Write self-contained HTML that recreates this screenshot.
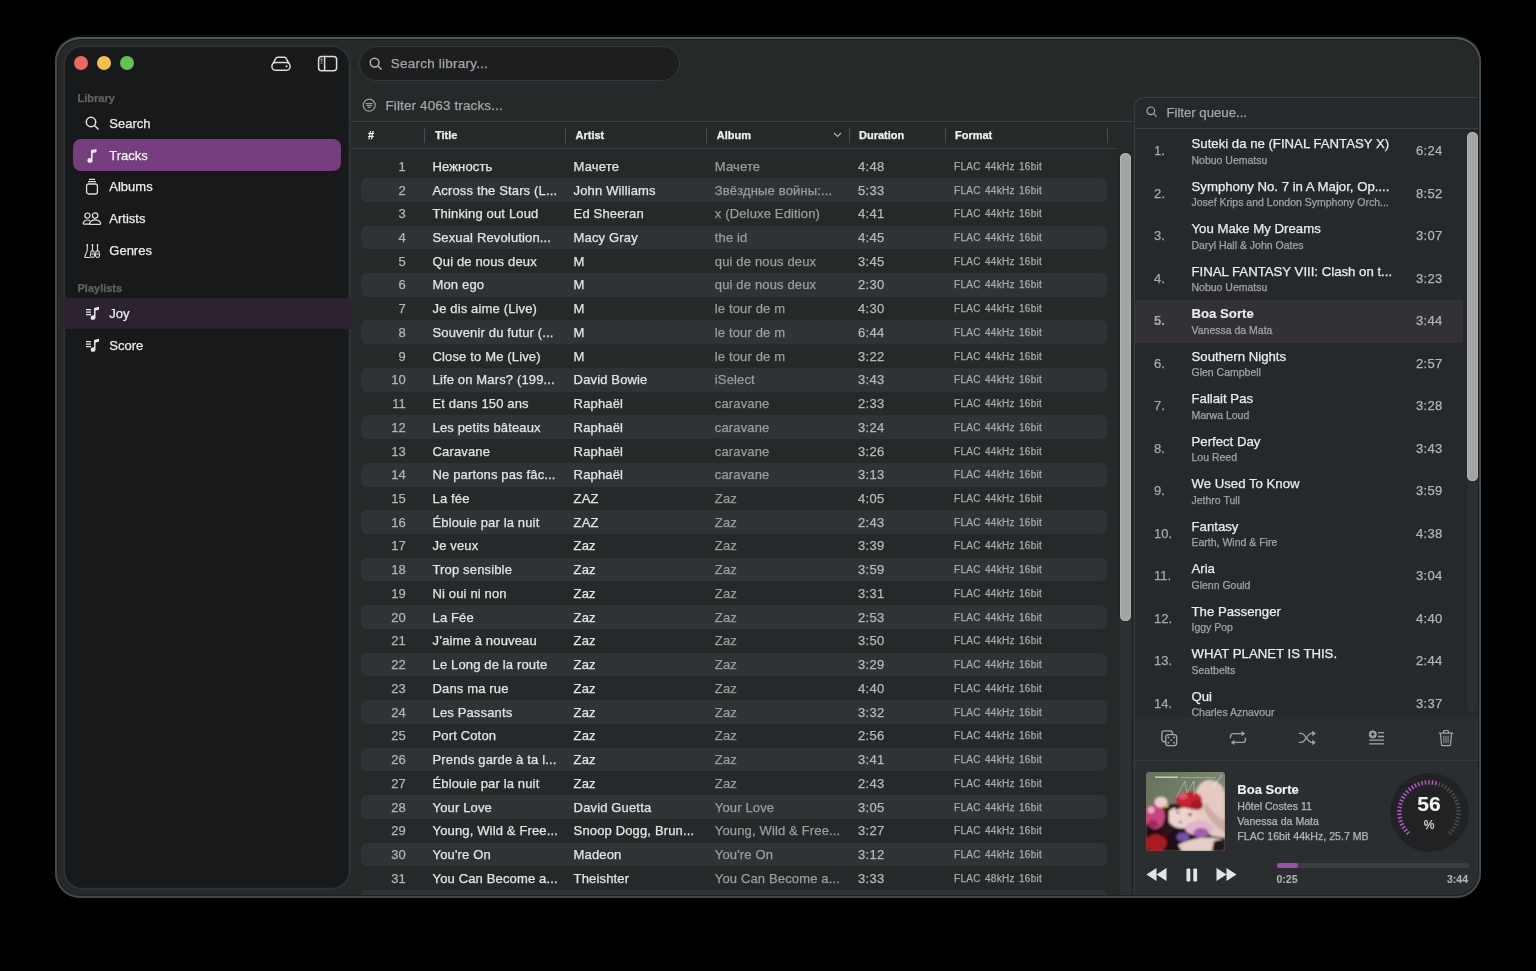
<!DOCTYPE html>
<html><head><meta charset="utf-8">
<style>
*{margin:0;padding:0;box-sizing:border-box}
html,body{width:1536px;height:971px;overflow:hidden;background:#000}
body{position:relative;font-family:"Liberation Sans",sans-serif;color:#e8e8e8}
.abs{position:absolute}
.t{position:absolute;white-space:nowrap;line-height:20px;height:20px;-webkit-text-stroke:0.25px currentColor}
#win{position:absolute;left:55px;top:37px;width:1426px;height:861px;border-radius:25px;background:#25292a}
#clip{position:absolute;left:0;top:0;width:1536px;height:971px;clip-path:inset(37px 55px 73px 55px round 25px);will-change:transform}
#winborder{position:absolute;left:55px;top:37px;width:1426px;height:861px;border-radius:25px;box-shadow:inset 0 2px 0 0 #535658,inset 0 0 0 2px #45484a,inset 0 0 0 3px #1d2022,0 -1.5px 0 0.5px #0e0f10}
#side{position:absolute;left:63px;top:45px;width:288px;height:845px;border-radius:19px;background:#18191b;box-shadow:inset 0 0 0 2px #2e3234,inset 0 0 0 3px #1c1f20;overflow:hidden}
.light{position:absolute;top:56px;width:14px;height:14px;border-radius:50%}
.lbl{font-size:11px;font-weight:bold;color:#606264}
.si{font-size:13px;color:#ececec}
.pill{position:absolute;left:73px;top:139px;width:267.7px;height:32px;border-radius:8px;background:#773e7f}
.joy{position:absolute;left:63px;top:297.5px;width:288px;height:31.7px;background:#2d2230}
#search{position:absolute;left:358.5px;top:45.5px;width:321.5px;height:35.5px;border-radius:17.75px;background:#1c1e20;box-shadow:inset 0 0 0 1px #36393b}
.ph{font-size:13.5px;color:#a4a6a8}
.hline{position:absolute;height:1px;background:#3a3d3f}
.hd{font-size:11px;font-weight:bold;color:#f0f0f0}
.sep{position:absolute;top:128px;width:1px;height:15px;background:#4a4d4f}
.band{position:absolute;left:360.5px;width:746.5px;height:23.73px;border-radius:6px;background:#2f3335}
.num{font-size:13px;color:#b4b4b4}
.ti{font-size:13px;color:#e4e4e4;letter-spacing:0.15px}
.al{font-size:13px;color:#9c9c9c;letter-spacing:0.15px}
.du{font-size:13px;color:#b8b8b8;letter-spacing:0.3px}
.fmt{font-size:10px;color:#a9a9a9;letter-spacing:0.3px;word-spacing:-1px}
#queue{position:absolute;left:1134px;top:97px;width:347px;height:800px;background:#26292b;border-top-left-radius:10px;box-shadow:inset 1px 1px 0 #3a3d3f}
.qnum{font-size:13px;color:#a8a8a8}
.qti{font-size:13.2px;color:#ececec}
.qar{font-size:10.5px;color:#a2a2a2}
.qdu{font-size:13px;color:#b4b4b4;letter-spacing:0.3px}
.b{font-weight:bold;-webkit-text-stroke:0.1px currentColor}
.qsel{position:absolute;left:1135px;width:328px;height:43px;background:#333036}
.np{font-size:10.6px;color:#b4b4b4}
svg{position:absolute;overflow:visible}
</style></head><body>
<div id="win"></div>
<div id="clip">
<div id="side"></div>
<div class="light" style="left:74px;background:#ec6a5f"></div>
<div class="light" style="left:97px;background:#f4c04f"></div>
<div class="light" style="left:120px;background:#61c454"></div>

<!-- sidebar top icons -->
<svg style="left:270px;top:55px" width="22" height="17" viewBox="0 0 22 17" fill="none" stroke="#dcdcdc" stroke-width="1.5"><path d="M3 8.6 L5.8 3.4 C6.2 2.6 6.8 2.2 7.7 2.2 H14.3 C15.2 2.2 15.8 2.6 16.2 3.4 L19 8.6"/><rect x="1.9" y="7.4" width="18.2" height="7.9" rx="3.9"/><circle cx="16.5" cy="11.35" r="1.05" fill="#dcdcdc" stroke="none"/></svg>
<svg style="left:317px;top:55px" width="21" height="17" viewBox="0 0 21 17" fill="none" stroke="#dcdcdc" stroke-width="1.5"><rect x="1.6" y="1.5" width="18" height="14.2" rx="3"/><path d="M7.6 1.5 V15.7"/><path d="M3.6 4.2 H5.4" stroke-width="1.1"/><path d="M3.6 6.2 H5.4" stroke-width="1.1" stroke-opacity="0.8"/><path d="M3.6 8.3 H5.4" stroke-width="1.1" stroke-opacity="0.6"/></svg>

<div class="t lbl" style="left:77.5px;top:88px">Library</div>
<svg style="left:85px;top:116px" width="15" height="15" viewBox="0 0 15 15" fill="none" stroke="#e6e6e6" stroke-width="1.5"><circle cx="6" cy="6" r="4.7"/><path d="M9.5 9.5 L13.5 13.5"/></svg>
<div class="t si" style="left:109.3px;top:114.2px">Search</div>
<div class="pill"></div>
<svg style="left:86px;top:148px" width="12" height="16" viewBox="0 0 12 16" fill="#f0f0f0"><path d="M5 2 L10.5 1 V4.2 L6.6 5 V12.3 A2.6 2.4 0 1 1 5 10.2 Z"/></svg>
<div class="t si" style="left:109.3px;top:145.8px;color:#f4f4f4">Tracks</div>
<svg style="left:84px;top:177px" width="16" height="19" viewBox="0 0 16 19" fill="none" stroke="#dedede" stroke-width="1.3"><rect x="2.6" y="7" width="10.8" height="10" rx="2"/><path d="M4 4.6 H12 M5 2.4 H11"/></svg>
<div class="t si" style="left:109.3px;top:177px">Albums</div>
<svg style="left:82px;top:211px" width="20" height="15" viewBox="0 0 20 15" fill="none" stroke="#dedede" stroke-width="1.2"><circle cx="5.4" cy="4.6" r="2.6"/><circle cx="13.1" cy="4.6" r="2.7"/><path d="M8.2 13.2 H2.2 C1.2 13.2 1 12.6 1.3 11.8 C2 10 3.6 9 5.4 9 C6.4 9 7.3 9.3 8 9.8"/><path d="M8.8 13.4 H17.6 C18.6 13.4 18.9 12.8 18.6 12 C17.8 10 15.7 8.8 13.1 8.8 C10.5 8.8 8.5 10 7.7 12 C7.4 12.8 7.7 13.4 8.8 13.4 Z"/></svg>
<div class="t si" style="left:109.3px;top:209.2px">Artists</div>
<svg style="left:83px;top:243px" width="19" height="17" viewBox="0 0 19 17" fill="none" stroke="#dedede" stroke-width="1.1"><path d="M4.3 1.6 V7.6 M9.5 1.6 V7.8 M14.5 1.6 V7.6"/><circle cx="4.3" cy="1.9" r="0.9" fill="#dedede" stroke="none"/><circle cx="9.5" cy="1.9" r="0.9" fill="#dedede" stroke="none"/><circle cx="14.5" cy="1.9" r="0.9" fill="#dedede" stroke="none"/><path d="M4.3 7.4 L1.9 13.2 C1.6 14 2 14.5 2.8 14.5 H7.2"/><path d="M9.5 7.6 C8.0 7.9 7.6 8.9 7.9 10 C7.4 11 7.3 12.5 7.8 13.5 C8.2 14.2 8.8 14.5 9.5 14.5 C10.2 14.5 10.8 14.2 11.2 13.5 C11.7 12.5 11.6 11 11.1 10 C11.4 8.9 11.0 7.9 9.5 7.6 Z"/><path d="M14.5 7.6 C13.0 7.9 12.6 8.9 12.9 10 C12.4 11 12.3 12.5 12.8 13.5 C13.2 14.2 13.8 14.5 14.5 14.5 C15.2 14.5 15.8 14.2 16.2 13.5 C16.7 12.5 16.6 11 16.1 10 C16.4 8.9 16.0 7.9 14.5 7.6 Z"/><path d="M8.6 11.2 H10.4 M13.6 11.2 H15.4" stroke-width="1.3"/></svg>
<div class="t si" style="left:109.3px;top:241.3px">Genres</div>

<div class="t lbl" style="left:77.5px;top:278px">Playlists</div>
<div class="joy"></div>
<svg style="left:85px;top:306px" width="16" height="15" viewBox="0 0 16 15" fill="#e8e8e8"><path d="M1 3 H6 V4.2 H1 Z M1 5.5 H6 V6.7 H1 Z M1 8 H6 V9.2 H1 Z"/><path d="M9 2 L14 0.8 V3.8 L10.5 4.6 V11.5 A2.4 2.2 0 1 1 9 9.6 Z"/></svg>
<div class="t si" style="left:109.3px;top:304px">Joy</div>
<svg style="left:85px;top:338px" width="16" height="15" viewBox="0 0 16 15" fill="#e8e8e8"><path d="M1 3 H6 V4.2 H1 Z M1 5.5 H6 V6.7 H1 Z M1 8 H6 V9.2 H1 Z"/><path d="M9 2 L14 0.8 V3.8 L10.5 4.6 V11.5 A2.4 2.2 0 1 1 9 9.6 Z"/></svg>
<div class="t si" style="left:109.3px;top:336.1px">Score</div>

<!-- search -->
<div id="search"></div>
<svg style="left:369px;top:57px" width="14" height="14" viewBox="0 0 14 14" fill="none" stroke="#b0b2b4" stroke-width="1.5"><circle cx="5.6" cy="5.6" r="4.4"/><path d="M8.8 8.8 L12.5 12.5"/></svg>
<div class="t ph" style="left:390.8px;top:53.8px;letter-spacing:0.22px">Search library...</div>

<svg style="left:362px;top:98px" width="14" height="14" viewBox="0 0 14 14" fill="none" stroke="#9a9c9e" stroke-width="1.2"><circle cx="7.2" cy="7.2" r="6"/><path d="M3.6 5.7 H10.8 M4.6 7.6 H9.8 M5.7 9.5 H8.7"/></svg>
<div class="t ph" style="left:385.5px;top:95.5px;letter-spacing:0.12px">Filter 4063 tracks...</div>

<!-- header -->
<div class="hline" style="left:351px;top:121px;width:784px"></div>
<div class="hline" style="left:351px;top:148px;width:766px"></div>
<div class="t hd" style="left:368px;top:124.8px">#</div>
<div class="sep" style="left:424px"></div>
<div class="t hd" style="left:435px;top:124.8px">Title</div>
<div class="sep" style="left:565px"></div>
<div class="t hd" style="left:575.5px;top:124.8px">Artist</div>
<div class="sep" style="left:706px"></div>
<div class="t hd" style="left:716.7px;top:124.8px">Album</div>
<svg style="left:833px;top:132px" width="9" height="6" viewBox="0 0 9 6" fill="none" stroke="#b8b8b8" stroke-width="1.1"><path d="M1 1 L4.5 4.5 L8 1"/></svg>
<div class="sep" style="left:849px"></div>
<div class="t hd" style="left:859px;top:124.8px">Duration</div>
<div class="sep" style="left:945px"></div>
<div class="t hd" style="left:955px;top:124.8px">Format</div>
<div class="sep" style="left:1107px"></div>

<div class="abs" style="left:350px;top:149px;width:785px;height:748px;overflow:hidden">
<div class="abs" style="left:-350px;top:-149px;width:1536px;height:971px">
<div class="t num" style="right:1130.2px;top:156.80px;text-align:right;">1</div>
<div class="t ti" style="left:432.5px;top:156.80px;">Нежность</div>
<div class="t ti" style="left:573.6px;top:156.80px;">Мачете</div>
<div class="t al" style="left:714.8px;top:156.80px;">Мачете</div>
<div class="t du" style="left:858px;top:156.80px;">4:48</div>
<div class="t fmt" style="left:954px;top:156.80px;">FLAC&nbsp; 44kHz&nbsp; 16bit</div>
<div class="band" style="top:178.06px"></div>
<div class="t num" style="right:1130.2px;top:180.53px;text-align:right;">2</div>
<div class="t ti" style="left:432.5px;top:180.53px;">Across the Stars (L...</div>
<div class="t ti" style="left:573.6px;top:180.53px;">John Williams</div>
<div class="t al" style="left:714.8px;top:180.53px;">Звёздные войны:...</div>
<div class="t du" style="left:858px;top:180.53px;">5:33</div>
<div class="t fmt" style="left:954px;top:180.53px;">FLAC&nbsp; 44kHz&nbsp; 16bit</div>
<div class="t num" style="right:1130.2px;top:204.26px;text-align:right;">3</div>
<div class="t ti" style="left:432.5px;top:204.26px;">Thinking out Loud</div>
<div class="t ti" style="left:573.6px;top:204.26px;">Ed Sheeran</div>
<div class="t al" style="left:714.8px;top:204.26px;">x (Deluxe Edition)</div>
<div class="t du" style="left:858px;top:204.26px;">4:41</div>
<div class="t fmt" style="left:954px;top:204.26px;">FLAC&nbsp; 44kHz&nbsp; 16bit</div>
<div class="band" style="top:225.53px"></div>
<div class="t num" style="right:1130.2px;top:227.99px;text-align:right;">4</div>
<div class="t ti" style="left:432.5px;top:227.99px;">Sexual Revolution...</div>
<div class="t ti" style="left:573.6px;top:227.99px;">Macy Gray</div>
<div class="t al" style="left:714.8px;top:227.99px;">the id</div>
<div class="t du" style="left:858px;top:227.99px;">4:45</div>
<div class="t fmt" style="left:954px;top:227.99px;">FLAC&nbsp; 44kHz&nbsp; 16bit</div>
<div class="t num" style="right:1130.2px;top:251.72px;text-align:right;">5</div>
<div class="t ti" style="left:432.5px;top:251.72px;">Qui de nous deux</div>
<div class="t ti" style="left:573.6px;top:251.72px;">M</div>
<div class="t al" style="left:714.8px;top:251.72px;">qui de nous deux</div>
<div class="t du" style="left:858px;top:251.72px;">3:45</div>
<div class="t fmt" style="left:954px;top:251.72px;">FLAC&nbsp; 44kHz&nbsp; 16bit</div>
<div class="band" style="top:272.99px"></div>
<div class="t num" style="right:1130.2px;top:275.45px;text-align:right;">6</div>
<div class="t ti" style="left:432.5px;top:275.45px;">Mon ego</div>
<div class="t ti" style="left:573.6px;top:275.45px;">M</div>
<div class="t al" style="left:714.8px;top:275.45px;">qui de nous deux</div>
<div class="t du" style="left:858px;top:275.45px;">2:30</div>
<div class="t fmt" style="left:954px;top:275.45px;">FLAC&nbsp; 44kHz&nbsp; 16bit</div>
<div class="t num" style="right:1130.2px;top:299.18px;text-align:right;">7</div>
<div class="t ti" style="left:432.5px;top:299.18px;">Je dis aime (Live)</div>
<div class="t ti" style="left:573.6px;top:299.18px;">M</div>
<div class="t al" style="left:714.8px;top:299.18px;">le tour de m</div>
<div class="t du" style="left:858px;top:299.18px;">4:30</div>
<div class="t fmt" style="left:954px;top:299.18px;">FLAC&nbsp; 44kHz&nbsp; 16bit</div>
<div class="band" style="top:320.44px"></div>
<div class="t num" style="right:1130.2px;top:322.91px;text-align:right;">8</div>
<div class="t ti" style="left:432.5px;top:322.91px;">Souvenir du futur (...</div>
<div class="t ti" style="left:573.6px;top:322.91px;">M</div>
<div class="t al" style="left:714.8px;top:322.91px;">le tour de m</div>
<div class="t du" style="left:858px;top:322.91px;">6:44</div>
<div class="t fmt" style="left:954px;top:322.91px;">FLAC&nbsp; 44kHz&nbsp; 16bit</div>
<div class="t num" style="right:1130.2px;top:346.64px;text-align:right;">9</div>
<div class="t ti" style="left:432.5px;top:346.64px;">Close to Me (Live)</div>
<div class="t ti" style="left:573.6px;top:346.64px;">M</div>
<div class="t al" style="left:714.8px;top:346.64px;">le tour de m</div>
<div class="t du" style="left:858px;top:346.64px;">3:22</div>
<div class="t fmt" style="left:954px;top:346.64px;">FLAC&nbsp; 44kHz&nbsp; 16bit</div>
<div class="band" style="top:367.90px"></div>
<div class="t num" style="right:1130.2px;top:370.37px;text-align:right;">10</div>
<div class="t ti" style="left:432.5px;top:370.37px;">Life on Mars? (199...</div>
<div class="t ti" style="left:573.6px;top:370.37px;">David Bowie</div>
<div class="t al" style="left:714.8px;top:370.37px;">iSelect</div>
<div class="t du" style="left:858px;top:370.37px;">3:43</div>
<div class="t fmt" style="left:954px;top:370.37px;">FLAC&nbsp; 44kHz&nbsp; 16bit</div>
<div class="t num" style="right:1130.2px;top:394.10px;text-align:right;">11</div>
<div class="t ti" style="left:432.5px;top:394.10px;">Et dans 150 ans</div>
<div class="t ti" style="left:573.6px;top:394.10px;">Raphaël</div>
<div class="t al" style="left:714.8px;top:394.10px;">caravane</div>
<div class="t du" style="left:858px;top:394.10px;">2:33</div>
<div class="t fmt" style="left:954px;top:394.10px;">FLAC&nbsp; 44kHz&nbsp; 16bit</div>
<div class="band" style="top:415.37px"></div>
<div class="t num" style="right:1130.2px;top:417.83px;text-align:right;">12</div>
<div class="t ti" style="left:432.5px;top:417.83px;">Les petits bâteaux</div>
<div class="t ti" style="left:573.6px;top:417.83px;">Raphaël</div>
<div class="t al" style="left:714.8px;top:417.83px;">caravane</div>
<div class="t du" style="left:858px;top:417.83px;">3:24</div>
<div class="t fmt" style="left:954px;top:417.83px;">FLAC&nbsp; 44kHz&nbsp; 16bit</div>
<div class="t num" style="right:1130.2px;top:441.56px;text-align:right;">13</div>
<div class="t ti" style="left:432.5px;top:441.56px;">Caravane</div>
<div class="t ti" style="left:573.6px;top:441.56px;">Raphaël</div>
<div class="t al" style="left:714.8px;top:441.56px;">caravane</div>
<div class="t du" style="left:858px;top:441.56px;">3:26</div>
<div class="t fmt" style="left:954px;top:441.56px;">FLAC&nbsp; 44kHz&nbsp; 16bit</div>
<div class="band" style="top:462.82px"></div>
<div class="t num" style="right:1130.2px;top:465.29px;text-align:right;">14</div>
<div class="t ti" style="left:432.5px;top:465.29px;">Ne partons pas fâc...</div>
<div class="t ti" style="left:573.6px;top:465.29px;">Raphaël</div>
<div class="t al" style="left:714.8px;top:465.29px;">caravane</div>
<div class="t du" style="left:858px;top:465.29px;">3:13</div>
<div class="t fmt" style="left:954px;top:465.29px;">FLAC&nbsp; 44kHz&nbsp; 16bit</div>
<div class="t num" style="right:1130.2px;top:489.02px;text-align:right;">15</div>
<div class="t ti" style="left:432.5px;top:489.02px;">La fée</div>
<div class="t ti" style="left:573.6px;top:489.02px;">ZAZ</div>
<div class="t al" style="left:714.8px;top:489.02px;">Zaz</div>
<div class="t du" style="left:858px;top:489.02px;">4:05</div>
<div class="t fmt" style="left:954px;top:489.02px;">FLAC&nbsp; 44kHz&nbsp; 16bit</div>
<div class="band" style="top:510.28px"></div>
<div class="t num" style="right:1130.2px;top:512.75px;text-align:right;">16</div>
<div class="t ti" style="left:432.5px;top:512.75px;">Éblouie par la nuit</div>
<div class="t ti" style="left:573.6px;top:512.75px;">ZAZ</div>
<div class="t al" style="left:714.8px;top:512.75px;">Zaz</div>
<div class="t du" style="left:858px;top:512.75px;">2:43</div>
<div class="t fmt" style="left:954px;top:512.75px;">FLAC&nbsp; 44kHz&nbsp; 16bit</div>
<div class="t num" style="right:1130.2px;top:536.48px;text-align:right;">17</div>
<div class="t ti" style="left:432.5px;top:536.48px;">Je veux</div>
<div class="t ti" style="left:573.6px;top:536.48px;">Zaz</div>
<div class="t al" style="left:714.8px;top:536.48px;">Zaz</div>
<div class="t du" style="left:858px;top:536.48px;">3:39</div>
<div class="t fmt" style="left:954px;top:536.48px;">FLAC&nbsp; 44kHz&nbsp; 16bit</div>
<div class="band" style="top:557.75px"></div>
<div class="t num" style="right:1130.2px;top:560.21px;text-align:right;">18</div>
<div class="t ti" style="left:432.5px;top:560.21px;">Trop sensible</div>
<div class="t ti" style="left:573.6px;top:560.21px;">Zaz</div>
<div class="t al" style="left:714.8px;top:560.21px;">Zaz</div>
<div class="t du" style="left:858px;top:560.21px;">3:59</div>
<div class="t fmt" style="left:954px;top:560.21px;">FLAC&nbsp; 44kHz&nbsp; 16bit</div>
<div class="t num" style="right:1130.2px;top:583.94px;text-align:right;">19</div>
<div class="t ti" style="left:432.5px;top:583.94px;">Ni oui ni non</div>
<div class="t ti" style="left:573.6px;top:583.94px;">Zaz</div>
<div class="t al" style="left:714.8px;top:583.94px;">Zaz</div>
<div class="t du" style="left:858px;top:583.94px;">3:31</div>
<div class="t fmt" style="left:954px;top:583.94px;">FLAC&nbsp; 44kHz&nbsp; 16bit</div>
<div class="band" style="top:605.21px"></div>
<div class="t num" style="right:1130.2px;top:607.67px;text-align:right;">20</div>
<div class="t ti" style="left:432.5px;top:607.67px;">La Fée</div>
<div class="t ti" style="left:573.6px;top:607.67px;">Zaz</div>
<div class="t al" style="left:714.8px;top:607.67px;">Zaz</div>
<div class="t du" style="left:858px;top:607.67px;">2:53</div>
<div class="t fmt" style="left:954px;top:607.67px;">FLAC&nbsp; 44kHz&nbsp; 16bit</div>
<div class="t num" style="right:1130.2px;top:631.40px;text-align:right;">21</div>
<div class="t ti" style="left:432.5px;top:631.40px;">J’aime à nouveau</div>
<div class="t ti" style="left:573.6px;top:631.40px;">Zaz</div>
<div class="t al" style="left:714.8px;top:631.40px;">Zaz</div>
<div class="t du" style="left:858px;top:631.40px;">3:50</div>
<div class="t fmt" style="left:954px;top:631.40px;">FLAC&nbsp; 44kHz&nbsp; 16bit</div>
<div class="band" style="top:652.66px"></div>
<div class="t num" style="right:1130.2px;top:655.13px;text-align:right;">22</div>
<div class="t ti" style="left:432.5px;top:655.13px;">Le Long de la route</div>
<div class="t ti" style="left:573.6px;top:655.13px;">Zaz</div>
<div class="t al" style="left:714.8px;top:655.13px;">Zaz</div>
<div class="t du" style="left:858px;top:655.13px;">3:29</div>
<div class="t fmt" style="left:954px;top:655.13px;">FLAC&nbsp; 44kHz&nbsp; 16bit</div>
<div class="t num" style="right:1130.2px;top:678.86px;text-align:right;">23</div>
<div class="t ti" style="left:432.5px;top:678.86px;">Dans ma rue</div>
<div class="t ti" style="left:573.6px;top:678.86px;">Zaz</div>
<div class="t al" style="left:714.8px;top:678.86px;">Zaz</div>
<div class="t du" style="left:858px;top:678.86px;">4:40</div>
<div class="t fmt" style="left:954px;top:678.86px;">FLAC&nbsp; 44kHz&nbsp; 16bit</div>
<div class="band" style="top:700.12px"></div>
<div class="t num" style="right:1130.2px;top:702.59px;text-align:right;">24</div>
<div class="t ti" style="left:432.5px;top:702.59px;">Les Passants</div>
<div class="t ti" style="left:573.6px;top:702.59px;">Zaz</div>
<div class="t al" style="left:714.8px;top:702.59px;">Zaz</div>
<div class="t du" style="left:858px;top:702.59px;">3:32</div>
<div class="t fmt" style="left:954px;top:702.59px;">FLAC&nbsp; 44kHz&nbsp; 16bit</div>
<div class="t num" style="right:1130.2px;top:726.32px;text-align:right;">25</div>
<div class="t ti" style="left:432.5px;top:726.32px;">Port Coton</div>
<div class="t ti" style="left:573.6px;top:726.32px;">Zaz</div>
<div class="t al" style="left:714.8px;top:726.32px;">Zaz</div>
<div class="t du" style="left:858px;top:726.32px;">2:56</div>
<div class="t fmt" style="left:954px;top:726.32px;">FLAC&nbsp; 44kHz&nbsp; 16bit</div>
<div class="band" style="top:747.58px"></div>
<div class="t num" style="right:1130.2px;top:750.05px;text-align:right;">26</div>
<div class="t ti" style="left:432.5px;top:750.05px;">Prends garde à ta l...</div>
<div class="t ti" style="left:573.6px;top:750.05px;">Zaz</div>
<div class="t al" style="left:714.8px;top:750.05px;">Zaz</div>
<div class="t du" style="left:858px;top:750.05px;">3:41</div>
<div class="t fmt" style="left:954px;top:750.05px;">FLAC&nbsp; 44kHz&nbsp; 16bit</div>
<div class="t num" style="right:1130.2px;top:773.78px;text-align:right;">27</div>
<div class="t ti" style="left:432.5px;top:773.78px;">Éblouie par la nuit</div>
<div class="t ti" style="left:573.6px;top:773.78px;">Zaz</div>
<div class="t al" style="left:714.8px;top:773.78px;">Zaz</div>
<div class="t du" style="left:858px;top:773.78px;">2:43</div>
<div class="t fmt" style="left:954px;top:773.78px;">FLAC&nbsp; 44kHz&nbsp; 16bit</div>
<div class="band" style="top:795.04px"></div>
<div class="t num" style="right:1130.2px;top:797.51px;text-align:right;">28</div>
<div class="t ti" style="left:432.5px;top:797.51px;">Your Love</div>
<div class="t ti" style="left:573.6px;top:797.51px;">David Guetta</div>
<div class="t al" style="left:714.8px;top:797.51px;">Your Love</div>
<div class="t du" style="left:858px;top:797.51px;">3:05</div>
<div class="t fmt" style="left:954px;top:797.51px;">FLAC&nbsp; 44kHz&nbsp; 16bit</div>
<div class="t num" style="right:1130.2px;top:821.24px;text-align:right;">29</div>
<div class="t ti" style="left:432.5px;top:821.24px;">Young, Wild &amp; Free...</div>
<div class="t ti" style="left:573.6px;top:821.24px;">Snoop Dogg, Brun...</div>
<div class="t al" style="left:714.8px;top:821.24px;">Young, Wild &amp; Free...</div>
<div class="t du" style="left:858px;top:821.24px;">3:27</div>
<div class="t fmt" style="left:954px;top:821.24px;">FLAC&nbsp; 44kHz&nbsp; 16bit</div>
<div class="band" style="top:842.50px"></div>
<div class="t num" style="right:1130.2px;top:844.97px;text-align:right;">30</div>
<div class="t ti" style="left:432.5px;top:844.97px;">You're On</div>
<div class="t ti" style="left:573.6px;top:844.97px;">Madeon</div>
<div class="t al" style="left:714.8px;top:844.97px;">You're On</div>
<div class="t du" style="left:858px;top:844.97px;">3:12</div>
<div class="t fmt" style="left:954px;top:844.97px;">FLAC&nbsp; 44kHz&nbsp; 16bit</div>
<div class="t num" style="right:1130.2px;top:868.70px;text-align:right;">31</div>
<div class="t ti" style="left:432.5px;top:868.70px;">You Can Become a...</div>
<div class="t ti" style="left:573.6px;top:868.70px;">Theishter</div>
<div class="t al" style="left:714.8px;top:868.70px;">You Can Become a...</div>
<div class="t du" style="left:858px;top:868.70px;">3:33</div>
<div class="t fmt" style="left:954px;top:868.70px;">FLAC&nbsp; 48kHz&nbsp; 16bit</div>
<div class="band" style="top:889.97px"></div>
<div class="t num" style="right:1130.2px;top:892.43px;text-align:right;">32</div>
<div class="t ti" style="left:432.5px;top:892.43px;">Pièce Flottante Ha...</div>
<div class="t ti" style="left:573.6px;top:892.43px;">Minuano</div>
<div class="t al" style="left:714.8px;top:892.43px;">Minuano &amp; Ambi...</div>
<div class="t du" style="left:858px;top:892.43px;">3:36</div>
<div class="t fmt" style="left:954px;top:892.43px;">FLAC&nbsp; 44kHz&nbsp; 16bit</div>
</div>
</div>
<!-- table scrollbar -->
<div class="abs" style="left:1120.2px;top:152.5px;width:11px;height:749px;border-radius:5.5px;background:#2d3133"></div>
<div class="abs" style="left:1120.3px;top:152.5px;width:10.8px;height:468.5px;border-radius:5.4px;background:#a3a5a5;box-shadow:inset 0 0 0 1px #b0b2b2,0 0 0 0.5px #1c1f20"></div>

<!-- queue -->
<div id="queue"></div>
<svg style="left:1146px;top:106px" width="12" height="12" viewBox="0 0 12 12" fill="none" stroke="#a8a8a8" stroke-width="1.2"><circle cx="4.8" cy="4.8" r="3.8"/><path d="M7.6 7.6 L10.6 10.6"/></svg>
<div class="t ph" style="left:1166.4px;top:103px;font-size:13.2px">Filter queue...</div>
<div class="hline" style="left:1135px;top:128.4px;width:346px"></div>
<div class="abs" style="left:1135px;top:130px;width:345px;height:586.5px;overflow:hidden">
<div class="abs" style="left:-1135px;top:-130px;width:1536px;height:971px">
<div class="t qnum" style="left:1154px;top:141.35px;">1.</div>
<div class="t qti" style="left:1191.5px;top:134.00px;">Suteki da ne (FINAL FANTASY X)</div>
<div class="t qar" style="left:1191.5px;top:149.70px;">Nobuo Uematsu</div>
<div class="t qdu" style="right:93.5px;top:141.35px;text-align:right;">6:24</div>
<div class="t qnum" style="left:1154px;top:183.85px;">2.</div>
<div class="t qti" style="left:1191.5px;top:176.50px;">Symphony No. 7 in A Major, Op....</div>
<div class="t qar" style="left:1191.5px;top:192.20px;">Josef Krips and London Symphony Orch...</div>
<div class="t qdu" style="right:93.5px;top:183.85px;text-align:right;">8:52</div>
<div class="t qnum" style="left:1154px;top:226.35px;">3.</div>
<div class="t qti" style="left:1191.5px;top:219.00px;">You Make My Dreams</div>
<div class="t qar" style="left:1191.5px;top:234.70px;">Daryl Hall &amp; John Oates</div>
<div class="t qdu" style="right:93.5px;top:226.35px;text-align:right;">3:07</div>
<div class="t qnum" style="left:1154px;top:268.85px;">4.</div>
<div class="t qti" style="left:1191.5px;top:261.50px;">FINAL FANTASY VIII: Clash on t...</div>
<div class="t qar" style="left:1191.5px;top:277.20px;">Nobuo Uematsu</div>
<div class="t qdu" style="right:93.5px;top:268.85px;text-align:right;">3:23</div>
<div class="qsel" style="top:299.70px"></div>
<div class="t qnum b" style="left:1154px;top:311.35px;">5.</div>
<div class="t qti b" style="left:1191.5px;top:304.00px;">Boa Sorte</div>
<div class="t qar" style="left:1191.5px;top:319.70px;">Vanessa da Mata</div>
<div class="t qdu" style="right:93.5px;top:311.35px;text-align:right;">3:44</div>
<div class="t qnum" style="left:1154px;top:353.85px;">6.</div>
<div class="t qti" style="left:1191.5px;top:346.50px;">Southern Nights</div>
<div class="t qar" style="left:1191.5px;top:362.20px;">Glen Campbell</div>
<div class="t qdu" style="right:93.5px;top:353.85px;text-align:right;">2:57</div>
<div class="t qnum" style="left:1154px;top:396.35px;">7.</div>
<div class="t qti" style="left:1191.5px;top:389.00px;">Fallait Pas</div>
<div class="t qar" style="left:1191.5px;top:404.70px;">Marwa Loud</div>
<div class="t qdu" style="right:93.5px;top:396.35px;text-align:right;">3:28</div>
<div class="t qnum" style="left:1154px;top:438.85px;">8.</div>
<div class="t qti" style="left:1191.5px;top:431.50px;">Perfect Day</div>
<div class="t qar" style="left:1191.5px;top:447.20px;">Lou Reed</div>
<div class="t qdu" style="right:93.5px;top:438.85px;text-align:right;">3:43</div>
<div class="t qnum" style="left:1154px;top:481.35px;">9.</div>
<div class="t qti" style="left:1191.5px;top:474.00px;">We Used To Know</div>
<div class="t qar" style="left:1191.5px;top:489.70px;">Jethro Tull</div>
<div class="t qdu" style="right:93.5px;top:481.35px;text-align:right;">3:59</div>
<div class="t qnum" style="left:1154px;top:523.85px;">10.</div>
<div class="t qti" style="left:1191.5px;top:516.50px;">Fantasy</div>
<div class="t qar" style="left:1191.5px;top:532.20px;">Earth, Wind &amp; Fire</div>
<div class="t qdu" style="right:93.5px;top:523.85px;text-align:right;">4:38</div>
<div class="t qnum" style="left:1154px;top:566.35px;">11.</div>
<div class="t qti" style="left:1191.5px;top:559.00px;">Aria</div>
<div class="t qar" style="left:1191.5px;top:574.70px;">Glenn Gould</div>
<div class="t qdu" style="right:93.5px;top:566.35px;text-align:right;">3:04</div>
<div class="t qnum" style="left:1154px;top:608.85px;">12.</div>
<div class="t qti" style="left:1191.5px;top:601.50px;">The Passenger</div>
<div class="t qar" style="left:1191.5px;top:617.20px;">Iggy Pop</div>
<div class="t qdu" style="right:93.5px;top:608.85px;text-align:right;">4:40</div>
<div class="t qnum" style="left:1154px;top:651.35px;">13.</div>
<div class="t qti" style="left:1191.5px;top:644.00px;">WHAT PLANET IS THIS.</div>
<div class="t qar" style="left:1191.5px;top:659.70px;">Seatbelts</div>
<div class="t qdu" style="right:93.5px;top:651.35px;text-align:right;">2:44</div>
<div class="t qnum" style="left:1154px;top:693.85px;">14.</div>
<div class="t qti" style="left:1191.5px;top:686.50px;">Qui</div>
<div class="t qar" style="left:1191.5px;top:702.20px;">Charles Aznavour</div>
<div class="t qdu" style="right:93.5px;top:693.85px;text-align:right;">3:37</div>
</div>
</div>
<div class="abs" style="left:1466.5px;top:132.3px;width:11.2px;height:580px;border-radius:5.6px;background:#2b2f31"></div>
<div class="abs" style="left:1466.7px;top:132.3px;width:11px;height:349px;border-radius:5.5px;background:#a3a5a5;box-shadow:inset 0 0 0 1px #b0b2b2,0 0 0 0.5px #1c1f20"></div>

<!-- toolbar -->
<div class="abs" style="left:1135px;top:716.5px;width:346px;height:181px;background:#2a2e30"></div>
<div class="abs" style="left:1134px;top:716px;width:1px;height:181px;background:#3a3d3f"></div>
<svg style="left:1160px;top:729px" width="18" height="18" viewBox="0 0 18 18" fill="none" stroke="#a4a6a6" stroke-width="1.3"><rect x="1.85" y="1.85" width="10.6" height="10.9" rx="2.4"/><rect x="5.75" y="5.55" width="10.9" height="11.1" rx="2.4" fill="#2a2e30"/><g fill="#a4a6a6" stroke="none"><circle cx="8.4" cy="8.5" r="0.95"/><circle cx="14.0" cy="8.5" r="0.95"/><circle cx="11.2" cy="11.1" r="0.95"/><circle cx="8.4" cy="13.8" r="0.95"/><circle cx="14.0" cy="13.8" r="0.95"/></g></svg>
<svg style="left:1229px;top:730px" width="18" height="16" viewBox="0 0 18 16" fill="none" stroke="#a0a0a0" stroke-width="1.4"><path d="M1.5 8.2 V6.6 C1.5 4.9 2.8 3.6 4.5 3.6 H13"/><path d="M12.6 0.9 L16.2 3.6 L12.6 6.3 Z" fill="#a0a0a0" stroke="none"/><path d="M16.5 7.8 V9.4 C16.5 11.1 15.2 12.4 13.5 12.4 H5"/><path d="M5.4 9.7 L1.8 12.4 L5.4 15.1 Z" fill="#a0a0a0" stroke="none"/></svg>
<svg style="left:1298px;top:730px" width="19" height="16" viewBox="0 0 19 16" fill="none" stroke="#a0a0a0" stroke-width="1.3"><path d="M0.8 3.4 H3.2 C7.6 3.4 9.2 12.4 13.4 12.4 H14.8"/><path d="M0.8 12.4 H3.2 C7.6 12.4 9.2 3.4 13.4 3.4 H14.8"/><path d="M14.2 9.5 L17.8 12.4 L14.2 15.3 Z M14.2 0.5 L17.8 3.4 L14.2 6.3 Z" fill="#a0a0a0" stroke="none"/></svg>
<svg style="left:1368px;top:729px" width="18" height="18" viewBox="0 0 18 18" fill="none" stroke="#a4a6a6" stroke-width="1.3"><circle cx="4.8" cy="5.3" r="3.9" fill="#a4a6a6" stroke="none"/><path d="M4.8 3.2 V7.4 M2.7 5.3 H6.9" stroke="#2a2e30" stroke-width="1.2"/><path d="M10 3.6 H16 M10 7.5 H16 M1.3 11.2 H16 M1.3 14.9 H16"/></svg>
<svg style="left:1437px;top:728px" width="18" height="19" viewBox="0 0 18 19" fill="none" stroke="#a4a6a6" stroke-width="1.2"><path d="M1.8 5.2 H16.2 M6.6 5 V3.4 C6.6 2.8 6.9 2.5 7.5 2.5 H10.5 C11.1 2.5 11.4 2.8 11.4 3.4 V5"/><path d="M3.4 5.4 L4.5 16.6 C4.6 17.3 5 17.6 5.6 17.6 H12.4 C13 17.6 13.4 17.3 13.5 16.6 L14.6 5.4"/><path d="M6.9 7.8 V15.2 M9 7.8 V15.2 M11.1 7.8 V15.2" stroke-width="0.9"/></svg>
<div class="hline" style="left:1135px;top:759.5px;width:345px;background:#383b3d"></div>

<!-- now playing -->
<div class="abs" style="left:1146px;top:772px;width:79px;height:79px;border-radius:3.5px;overflow:hidden;background:#74806a">
<svg style="left:0;top:0" width="79" height="79" viewBox="0 0 79 79">
<defs><filter id="bl" x="-30%" y="-30%" width="160%" height="160%"><feGaussianBlur stdDeviation="1.1"/></filter>
<linearGradient id="bgg" x1="0" y1="0" x2="1" y2="0.4"><stop offset="0" stop-color="#66725c"/><stop offset="1" stop-color="#7e8b74"/></linearGradient></defs>
<rect width="79" height="79" fill="url(#bgg)"/>
<g filter="url(#bl)">
<path d="M0 52 L12 34 L30 32 L48 42 L79 62 L79 79 L0 79 Z" fill="#1a1112"/>
<path d="M47 34 C48 18 54 8 63 8 C72 8 79 14 79 24 L79 66 L66 64 L48 52 Z" fill="#e4cac3"/>
<path d="M60 30 C66 40 72 46 79 48 L79 60 C70 56 62 46 58 36 Z" fill="#cdaca6"/>
<ellipse cx="23" cy="47" rx="10" ry="14" fill="#211415"/>
<path d="M23 39 C29 33 40 33 48 39 C52 45 50 52 44 55 C36 58 27 56 23 50 Z" fill="#ecd2cc"/>
<ellipse cx="44" cy="42.5" rx="2" ry="1.6" fill="#b8283a"/><ellipse cx="32" cy="40.5" rx="1.6" ry="1.1" fill="#5a6478"/><ellipse cx="34.5" cy="50" rx="1.6" ry="1.1" fill="#5a6478"/><path d="M28 33 C32 30 38 31 40 34 L30 38 Z" fill="#2a1a1b"/>
<ellipse cx="43" cy="28" rx="13" ry="8.5" fill="#c4202d"/>
<ellipse cx="37" cy="24" rx="4.5" ry="3.5" fill="#d4586a"/>
<ellipse cx="51" cy="33" rx="6" ry="5" fill="#a31522"/>
<ellipse cx="9" cy="44" rx="10" ry="13" fill="#c4447f"/>
<ellipse cx="15" cy="30" rx="6.5" ry="5.5" fill="#eec9d2"/>
<ellipse cx="5" cy="38" rx="3.5" ry="3.5" fill="#e2aec0"/>
<ellipse cx="7" cy="52" rx="5" ry="4" fill="#9e2a5a"/>
<ellipse cx="20" cy="34" rx="2.6" ry="1.4" fill="#e0cc3c"/>
<ellipse cx="10" cy="71" rx="11" ry="9" fill="#a51a22"/>
<ellipse cx="18" cy="62" rx="5" ry="3" fill="#3a1015"/>
<ellipse cx="53" cy="56" rx="14" ry="7.5" fill="#e4b2cc"/>
<ellipse cx="37" cy="65" rx="6.5" ry="4.5" fill="#7650a8"/>
<ellipse cx="55" cy="61" rx="7.5" ry="5" fill="#9f5fb2"/>
<path d="M32 73 C42 67 60 63 76 67 L79 79 L36 79 Z" fill="#e6cdc7"/>
<path d="M68 69 L79 67 L79 79 L66 79 Z" fill="#241718"/>
</g>
<rect x="9" y="4.4" width="23" height="1.6" fill="rgba(255,255,255,0.6)"/>
<rect x="34" y="5" width="36" height="1.1" fill="rgba(255,255,255,0.3)"/>
<path d="M30 26 L39 9 L41 21 L48 9 L48 24" fill="none" stroke="rgba(255,255,255,0.35)" stroke-width="1"/>
<path d="M76 3 L66 16" stroke="rgba(255,255,255,0.25)" stroke-width="2"/>
</svg></div>
<div class="t b" style="left:1237.3px;top:779.5px;font-size:13px;color:#f2f2f2">Boa Sorte</div>
<div class="t np" style="left:1237.3px;top:795.5px">Hôtel Costes 11</div>
<div class="t np" style="left:1237.3px;top:811px">Vanessa da Mata</div>
<div class="t np" style="left:1237.3px;top:825.6px">FLAC 16bit 44kHz, 25.7 MB</div>

<div class="abs" style="left:1390px;top:772.5px;width:79px;height:79px;border-radius:50%;background:#202224"></div>
<svg style="left:1389.3px;top:771.7px" width="80" height="80" viewBox="-40 -40 80 80">
<line x1="-19.52" y1="19.52" x2="-22.49" y2="22.49" stroke="#ac5cc0" stroke-width="1.6"/>
<line x1="-21.67" y1="17.09" x2="-24.97" y2="19.69" stroke="#ac5cc0" stroke-width="1.6"/>
<line x1="-23.53" y1="14.42" x2="-27.11" y2="16.62" stroke="#ac5cc0" stroke-width="1.6"/>
<line x1="-25.06" y1="11.56" x2="-28.88" y2="13.31" stroke="#ac5cc0" stroke-width="1.6"/>
<line x1="-26.25" y1="8.53" x2="-30.24" y2="9.83" stroke="#ac5cc0" stroke-width="1.6"/>
<line x1="-27.07" y1="5.38" x2="-31.19" y2="6.20" stroke="#ac5cc0" stroke-width="1.6"/>
<line x1="-27.51" y1="2.17" x2="-31.70" y2="2.49" stroke="#ac5cc0" stroke-width="1.6"/>
<line x1="-27.58" y1="-1.08" x2="-31.78" y2="-1.25" stroke="#ac5cc0" stroke-width="1.6"/>
<line x1="-27.26" y1="-4.32" x2="-31.41" y2="-4.97" stroke="#ac5cc0" stroke-width="1.6"/>
<line x1="-26.56" y1="-7.49" x2="-30.61" y2="-8.63" stroke="#ac5cc0" stroke-width="1.6"/>
<line x1="-25.50" y1="-10.56" x2="-29.38" y2="-12.17" stroke="#ac5cc0" stroke-width="1.6"/>
<line x1="-24.08" y1="-13.49" x2="-27.75" y2="-15.54" stroke="#ac5cc0" stroke-width="1.6"/>
<line x1="-22.33" y1="-16.22" x2="-25.73" y2="-18.69" stroke="#ac5cc0" stroke-width="1.6"/>
<line x1="-20.27" y1="-18.73" x2="-23.35" y2="-21.59" stroke="#ac5cc0" stroke-width="1.6"/>
<line x1="-17.92" y1="-20.99" x2="-20.65" y2="-24.18" stroke="#ac5cc0" stroke-width="1.6"/>
<line x1="-15.33" y1="-22.95" x2="-17.67" y2="-26.44" stroke="#ac5cc0" stroke-width="1.6"/>
<line x1="-12.53" y1="-24.59" x2="-14.44" y2="-28.33" stroke="#ac5cc0" stroke-width="1.6"/>
<line x1="-9.55" y1="-25.89" x2="-11.01" y2="-29.83" stroke="#ac5cc0" stroke-width="1.6"/>
<line x1="-6.44" y1="-26.84" x2="-7.42" y2="-30.92" stroke="#ac5cc0" stroke-width="1.6"/>
<line x1="-3.24" y1="-27.41" x2="-3.74" y2="-31.58" stroke="#ac5cc0" stroke-width="1.6"/>
<line x1="0.00" y1="-27.60" x2="0.00" y2="-31.80" stroke="#ac5cc0" stroke-width="1.6"/>
<line x1="3.24" y1="-27.41" x2="3.74" y2="-31.58" stroke="#ac5cc0" stroke-width="1.6"/>
<line x1="6.44" y1="-26.84" x2="7.42" y2="-30.92" stroke="#ac5cc0" stroke-width="1.6"/>
<line x1="9.55" y1="-25.89" x2="11.01" y2="-29.83" stroke="#4a4b4d" stroke-width="1.6"/>
<line x1="12.53" y1="-24.59" x2="14.44" y2="-28.33" stroke="#4a4b4d" stroke-width="1.6"/>
<line x1="15.33" y1="-22.95" x2="17.67" y2="-26.44" stroke="#4a4b4d" stroke-width="1.6"/>
<line x1="17.92" y1="-20.99" x2="20.65" y2="-24.18" stroke="#4a4b4d" stroke-width="1.6"/>
<line x1="20.27" y1="-18.73" x2="23.35" y2="-21.59" stroke="#4a4b4d" stroke-width="1.6"/>
<line x1="22.33" y1="-16.22" x2="25.73" y2="-18.69" stroke="#4a4b4d" stroke-width="1.6"/>
<line x1="24.08" y1="-13.49" x2="27.75" y2="-15.54" stroke="#4a4b4d" stroke-width="1.6"/>
<line x1="25.50" y1="-10.56" x2="29.38" y2="-12.17" stroke="#4a4b4d" stroke-width="1.6"/>
<line x1="26.56" y1="-7.49" x2="30.61" y2="-8.63" stroke="#4a4b4d" stroke-width="1.6"/>
<line x1="27.26" y1="-4.32" x2="31.41" y2="-4.97" stroke="#4a4b4d" stroke-width="1.6"/>
<line x1="27.58" y1="-1.08" x2="31.78" y2="-1.25" stroke="#4a4b4d" stroke-width="1.6"/>
<line x1="27.51" y1="2.17" x2="31.70" y2="2.49" stroke="#4a4b4d" stroke-width="1.6"/>
<line x1="27.07" y1="5.38" x2="31.19" y2="6.20" stroke="#4a4b4d" stroke-width="1.6"/>
<line x1="26.25" y1="8.53" x2="30.24" y2="9.83" stroke="#4a4b4d" stroke-width="1.6"/>
<line x1="25.06" y1="11.56" x2="28.88" y2="13.31" stroke="#4a4b4d" stroke-width="1.6"/>
<line x1="23.53" y1="14.42" x2="27.11" y2="16.62" stroke="#4a4b4d" stroke-width="1.6"/>
<line x1="21.67" y1="17.09" x2="24.97" y2="19.69" stroke="#4a4b4d" stroke-width="1.6"/>
<line x1="19.52" y1="19.52" x2="22.49" y2="22.49" stroke="#4a4b4d" stroke-width="1.6"/>
</svg>
<div class="t b" style="left:1389px;top:793px;width:80px;text-align:center;font-size:21px;color:#f4f4f4;line-height:22px;height:22px">56</div>
<div class="t" style="left:1389px;top:814.5px;width:80px;text-align:center;font-size:12px;color:#d8d8d8">%</div>

<div class="abs" style="left:1276.5px;top:863px;width:192px;height:4.5px;border-radius:2.25px;background:#3c3f41"></div>
<div class="abs" style="left:1276.5px;top:863px;width:21.5px;height:4.5px;border-radius:2.25px;background:#9a50a8"></div>
<div class="t b" style="left:1276.5px;top:868.9px;font-size:10.5px;color:#b0b0b0">0:25</div>
<div class="t b" style="right:68px;top:868.9px;font-size:10.5px;color:#b0b0b0">3:44</div>

<svg style="left:1146px;top:867px" width="21" height="15" viewBox="0 0 21 15" fill="#e4e4e4"><path d="M10.5 1 V14 L0.5 7.5 Z M20.5 1 V14 L10.5 7.5 Z"/></svg>
<svg style="left:1185.5px;top:867.5px" width="12" height="14" viewBox="0 0 12 14" fill="#e4e4e4"><rect x="0.5" y="0.5" width="3.8" height="13" rx="1"/><rect x="7.3" y="0.5" width="3.8" height="13" rx="1"/></svg>
<svg style="left:1215.5px;top:867px" width="21" height="15" viewBox="0 0 21 15" fill="#e4e4e4"><path d="M0.5 1 V14 L10.5 7.5 Z M10.5 1 V14 L20.5 7.5 Z"/></svg>
</div>
<div id="winborder"></div>
</body></html>
